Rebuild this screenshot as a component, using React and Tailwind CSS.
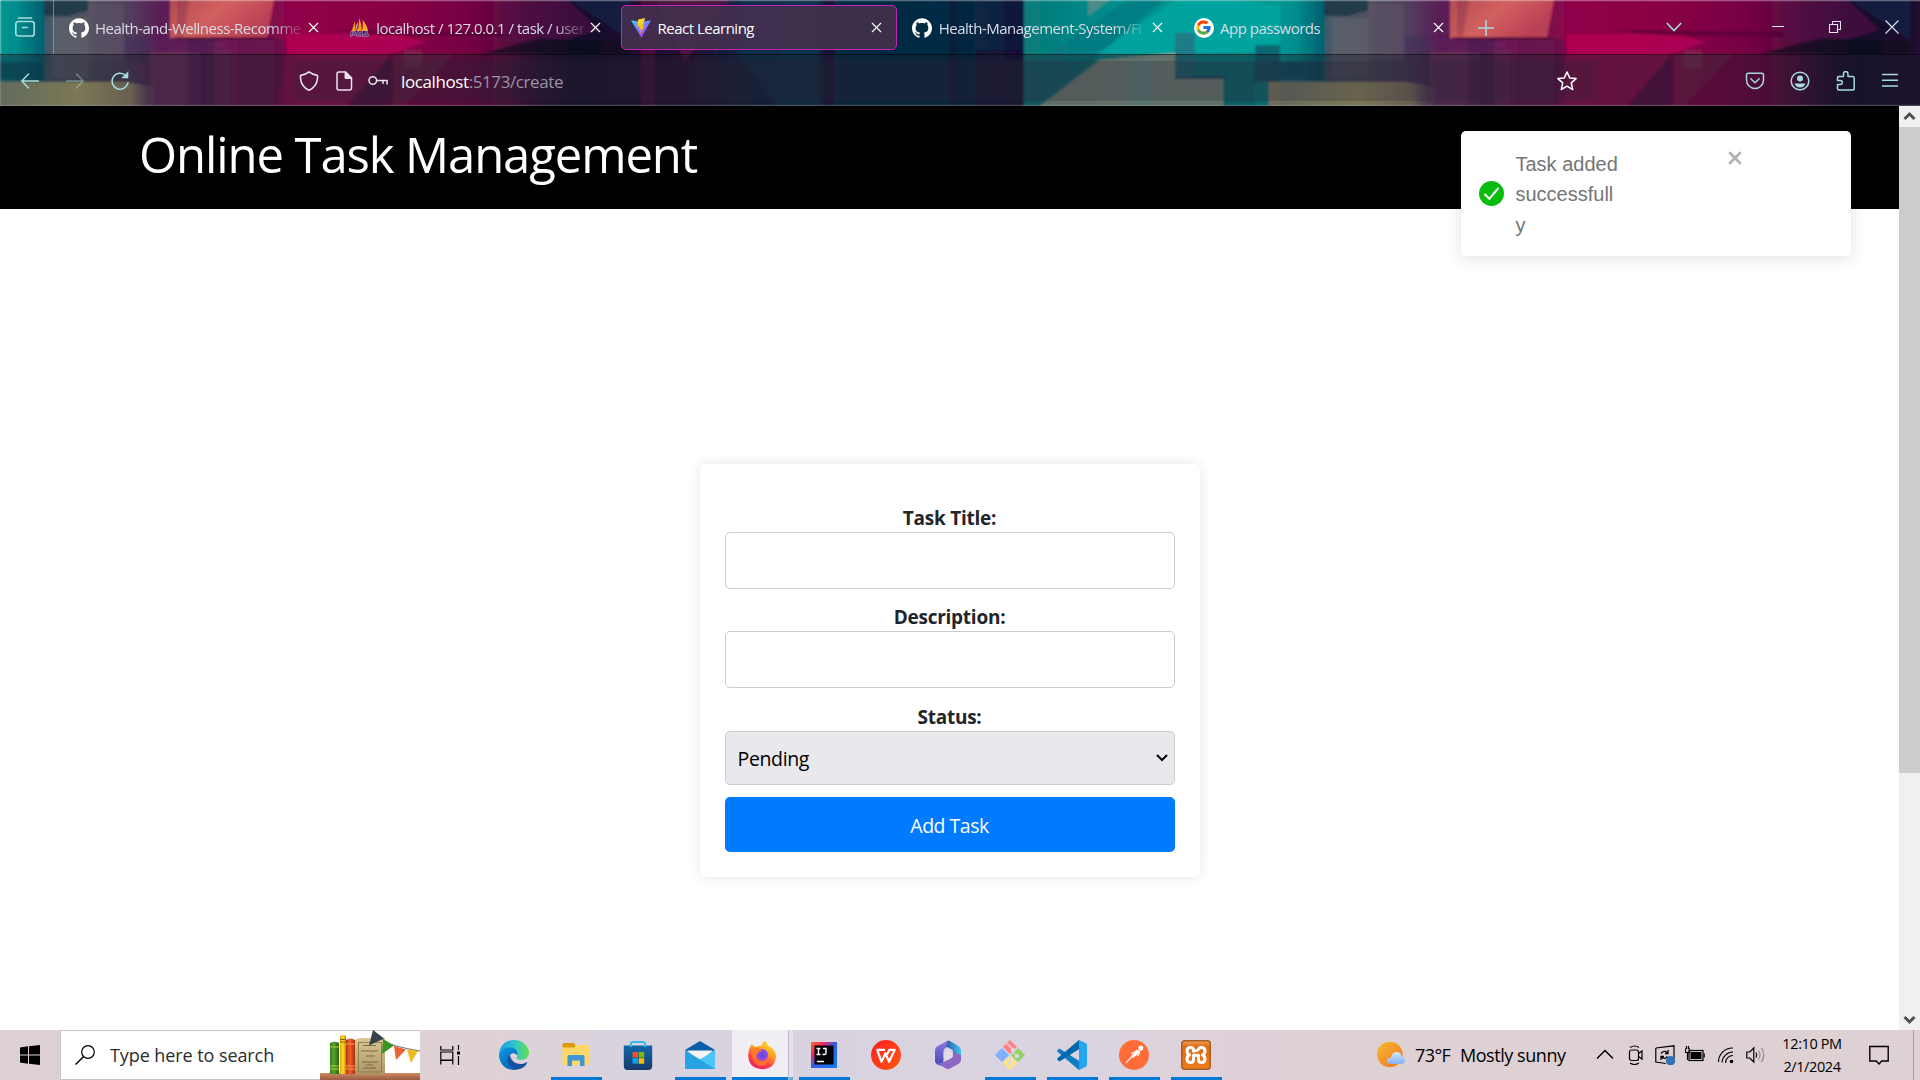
import React from "react";
import { SiGithub } from "react-icons/si";
import { FcGoogle } from "react-icons/fc";
import { X } from "lucide-react";

const UI = "font-['Open_Sans','Noto_Sans',sans-serif]";

/* One 1280px wide tile of the browser theme artwork */
function ThemeTile() {
  return (
    <g id="tile">
      <rect width="1281" height="106" fill="url(#base)" />
      <rect width="20" height="60" fill="#00a09c" opacity=".3" />
      <rect y="62" width="43" height="18" fill="#004c62" opacity=".6" />
      <path d="M44 0h44v10l-20 6H44z" fill="#10303f" opacity=".7" />
      <rect x="52" y="18" width="36" height="60" fill="#6c6870" opacity=".45" />
      <rect x="88" y="4" width="36" height="56" fill="#66586c" opacity=".4" />
      <rect x="125" y="36" width="24" height="26" fill="#3a2c58" opacity=".4" />
      <path d="M0 82h125l30 5v19H0z" fill="url(#sand)" />
      <rect x="150" y="52" width="50" height="54" fill="#8a5068" opacity=".35" />
      <rect x="188" y="38" width="26" height="68" fill="#3d1c4c" opacity=".45" />
      <rect x="214" y="50" width="16" height="56" fill="#6d2858" opacity=".5" />
      <rect x="238" y="40" width="46" height="66" fill="#5c164c" opacity=".6" />
      <path d="M170 0h104l-7 38h-97z" fill="url(#coral)" />
      <path d="M177 0h12l-6 36h-6z" fill="#7c2c48" opacity=".35" />
      <path d="M171 37h97l14 3H180z" fill="#4c0a30" opacity=".7" />
      <path d="M286 34h110l30 8-40 14H288z" fill="#bb0058" opacity=".7" />
      <path d="M330 30l180 2v5l-130-2z" fill="#4e0034" opacity=".6" />
      <path d="M392 54l-45 52h45z" fill="#4d0d45" opacity=".75" />
      <path d="M278 106l8-50h105l-45 50z" fill="#a01058" opacity=".45" />
      <path d="M394 54h60l-50 52h-10z" fill="#77304e" opacity=".5" />
      <rect x="404" y="50" width="18" height="18" fill="#81435c" opacity=".4" />
      <path d="M503 0h66l30 30-40 12h-56z" fill="#591049" opacity=".6" />
      <path d="M570 0h60v40z" fill="#162048" opacity=".7" />
      <path d="M480 54l60-16 90 4v12z" fill="#100a20" opacity=".7" />
      <path d="M641 0h14v106h-14z" fill="#7b0c48" opacity=".4" />
      <path d="M655 0h75l-45 62z" fill="#6d154b" opacity=".55" />
      <path d="M740 0h78v106h-40l-40-50z" fill="#103752" opacity=".6" />
      <rect x="822" width="13" height="106" fill="#1e0c35" opacity=".8" />
      <rect x="950" y="0" width="6" height="106" fill="#100c30" opacity=".5" />
      <rect x="976" y="50" width="48" height="56" fill="#1b1236" opacity=".75" />
      <rect x="1004" width="20" height="60" fill="#160e35" opacity=".5" />
      <path d="M1095 54l80-54h60l50 6v44l-110 4z" fill="#00aaa4" opacity=".7" />
      <path d="M1088 0h22l-22 16z" fill="#4a8c88" />
      <path d="M1024 106V70l104-70h36l-120 100z" fill="#087480" opacity=".6" />
      <path d="M1040 106l60-46 75-7v25h48v28z" fill="#a9ab92" opacity=".85" />
      <rect x="1130" y="60" width="22" height="46" fill="#6fb3ab" opacity=".4" />
      <rect x="1175" y="33" width="20" height="46" fill="#1f7884" opacity=".9" />
      <path d="M1195 54h60V44h26v38h-26v24h-30V78h-30z" fill="#008583" opacity=".85" />
      <path d="M1194 60v16h32v3h-51v-2h18z" fill="#0a4a60" opacity=".7" />
      <path d="M1256 46h25v36h-28z" fill="#0b5d6c" opacity=".8" />
      <path d="M1269 82h12v24h-12z" fill="#a8a578" />
    </g>
  );
}

function ThemeArt() {
  return (
    <svg className="absolute inset-0 h-[106px] w-[1920px]" viewBox="0 0 1920 106">
      <defs>
        <linearGradient id="base" x1="0" x2="1280" y1="0" y2="0" gradientUnits="userSpaceOnUse">
          <stop offset="0" stopColor="#009090" />
          <stop offset=".018" stopColor="#008084" />
          <stop offset=".034" stopColor="#006070" />
          <stop offset=".036" stopColor="#445968" />
          <stop offset=".07" stopColor="#50505f" />
          <stop offset=".1" stopColor="#51405d" />
          <stop offset=".125" stopColor="#5a1c56" />
          <stop offset=".17" stopColor="#681c58" />
          <stop offset=".215" stopColor="#800c4c" />
          <stop offset=".23" stopColor="#900048" />
          <stop offset=".3" stopColor="#8a0046" />
          <stop offset=".36" stopColor="#780044" />
          <stop offset=".39" stopColor="#62083f" />
          <stop offset=".42" stopColor="#310d35" />
          <stop offset=".45" stopColor="#11102a" />
          <stop offset=".5" stopColor="#210e30" />
          <stop offset=".54" stopColor="#281034" />
          <stop offset=".57" stopColor="#14203e" />
          <stop offset=".64" stopColor="#092a42" />
          <stop offset=".66" stopColor="#062a42" />
          <stop offset=".73" stopColor="#042b44" />
          <stop offset=".799" stopColor="#0a2040" />
          <stop offset=".8" stopColor="#087a7a" />
          <stop offset=".88" stopColor="#00908e" />
          <stop offset="1" stopColor="#009793" />
        </linearGradient>
        <linearGradient id="coral" x1="0" x2="1" y1="0" y2=".4">
          <stop offset="0" stopColor="#b34b55" />
          <stop offset=".5" stopColor="#d2605e" />
          <stop offset="1" stopColor="#b83f56" />
        </linearGradient>
        <linearGradient id="sand" x1="0" x2="1">
          <stop offset="0" stopColor="#92a080" />
          <stop offset=".5" stopColor="#bdb672" />
          <stop offset=".85" stopColor="#9a8c6c" />
          <stop offset="1" stopColor="#70506a" stopOpacity=".3" />
        </linearGradient>
        <filter id="soft" x="0" y="0" width="100%" height="100%">
          <feGaussianBlur stdDeviation="1.3" />
        </filter>
      </defs>
      <g filter="url(#soft)">
        <ThemeTile />
        <use href="#tile" x="1280" />
      </g>
      <rect y="54" width="1920" height="52" fill="#1c1b2a" opacity=".4" />
      <rect y="54" width="1920" height="1" fill="#000" opacity=".45" />
    </svg>
  );
}

function PmaIcon() {
  return (
    <svg viewBox="0 0 20 20" className="size-5">
      <path d="M1.500 13C3 10 4 6 4.500 3c1 3 1 7 .5 10zM7 13c2-4 2-9 2-13 2 4 3 9 2.500 13z" fill="#f89c0e" />
      <path d="M12 13c1-3 1-7 .5-11 3 3 5 7 5.500 11z" fill="#f9a825" />
      <path d="M6 13c1-3 2-6 2-9-2 3-2 6-3 9z" fill="#c9c9d8" />
      <path d="M.8 19l1-5h2.500q1.500 1.500-.5 3H1.800M7 19l1-5 1.500 3 2.500-3-.5 5M13.500 19l3-5 2 5M14.500 17.500h3" fill="none" stroke="#fff" strokeWidth="2" opacity=".6" />
      <path d="M.8 19l1-5h2.500q1.500 1.500-.5 3H1.800M7 19l1-5 1.500 3 2.500-3-.5 5M13.500 19l3-5 2 5M14.500 17.500h3" fill="none" stroke="#3b3f88" strokeWidth="1.200" />
    </svg>
  );
}

function ViteIcon() {
  return (
    <svg viewBox="0 0 20 20" className="size-5">
      <defs>
        <linearGradient id="vt" x1="0" x2=".6" y1="0" y2="1">
          <stop offset="0" stopColor="#41d1ff" />
          <stop offset="1" stopColor="#b030fe" />
        </linearGradient>
        <linearGradient id="vb" x1="0" x2="0" y1="0" y2="1">
          <stop offset="0" stopColor="#ffdd35" />
          <stop offset="1" stopColor="#ffa800" />
        </linearGradient>
      </defs>
      <path d="M0 2.300l10 1.800 10-1.800L10.400 19.800z" fill="url(#vt)" />
      <path d="M14.200 0L7.100 1.400 6.600 9.100l2.200-.5-.7 3.300 1.900-.6-1.200 4.900 4.700-8-2.100.4z" fill="url(#vb)" />
    </svg>
  );
}

const tabs = [
  { icon: <SiGithub className="size-5 text-white" />, title: "Health-and-Wellness-Recomme", fade: true },
  { icon: <PmaIcon />, title: "localhost / 127.0.0.1 / task / user", fade: true },
  { icon: <ViteIcon />, title: "React Learning", active: true },
  { icon: <SiGithub className="size-5 text-white" />, title: "Health-Management-System/Fi", fade: true },
  {
    icon: (
      <span className="flex size-5 items-center justify-center rounded-full bg-white">
        <FcGoogle className="size-[17px]" />
      </span>
    ),
    title: "App passwords",
  },
];

function Tab({ icon, title, fade, active }) {
  return (
    <div
      className={
        "flex h-[45px] w-[276.25px] shrink-0 items-center rounded-[5px] border pl-[9.500px] pr-[11px] " +
        (active ? "border-[#c223b4] bg-[#42304e]/90" : "border-transparent")
      }
    >
      <span className="shrink-0">{icon}</span>
      <span
        className={
          "ml-[6.500px] w-[209px] whitespace-nowrap text-[15px] leading-6 tracking-[-0.5px] " +
          (active ? "text-white " : "text-[#d8dce6] ") +
          (fade ? "[mask-image:linear-gradient(to_right,black_84%,rgba(0,0,0,0.15))]" : "")
        }
      >
        {title}
      </span>
      <X className="ml-[3px] size-[17px] shrink-0 text-white" strokeWidth={1.600} />
    </div>
  );
}

function TabBar() {
  return (
    <div className="flex h-[54px] items-start text-[#a5dbde]">
      <div className="flex h-[54px] w-[54px] items-center justify-end border-r border-[#8f9fae]/70 pr-[18px]">
        <svg className="size-5" viewBox="0 0 20 20" fill="none" stroke="currentColor" strokeWidth="1.700" strokeLinecap="round">
          <path d="M3.500 1h13" />
          <rect x=".8" y="4.500" width="18.400" height="14.500" rx="2.500" />
          <path d="M7.500 10.500h5" />
        </svg>
      </div>
      <div className="ml-[4px] flex gap-[5px] pt-[5px]">
        {tabs.map((t) => (
          <Tab key={t.title} {...t} />
        ))}
      </div>
      <svg className="ml-[19px] mt-[20px] size-4" viewBox="0 0 16 16" stroke="currentColor" strokeWidth="1.500">
        <path d="M8 0v16M0 8h16" />
      </svg>
      <svg className="ml-[172px] mt-[22px] h-2.5 w-4" viewBox="0 0 16 10" fill="none" stroke="currentColor" strokeWidth="1.600">
        <path d="M.8 1L8 8.500 15.200 1" />
      </svg>
      <svg className="ml-[90px] mt-[20px] h-[14px] w-3" viewBox="0 0 12 14" stroke="#e5e5f0">
        <path d="M0 6.500h12" />
      </svg>
      <svg className="ml-[45px] mt-[21px] size-3" viewBox="0 0 12 12" fill="none" stroke="#e5e5f0" strokeWidth="1.100">
        <path d="M.5 3.500h8v8h-8zM3.500 3.500v-3h8v8h-3" />
      </svg>
      <svg className="ml-[44px] mt-[20px] size-[14px]" viewBox="0 0 14 14" stroke="#d8dce6" strokeWidth="1.200">
        <path d="M.5.5l13 13M13.500.5l-13 13" />
      </svg>
    </div>
  );
}

function ToolIcon({ className, children }) {
  return (
    <svg
      className={"size-5 shrink-0 " + className}
      viewBox="0 0 20 20"
      fill="none"
      stroke="currentColor"
      strokeWidth="1.500"
      strokeLinecap="round"
      strokeLinejoin="round"
    >
      {children}
    </svg>
  );
}

function Toolbar() {
  return (
    <div className="flex h-[52px] items-center pt-px text-[#a5dbde]">
      <ToolIcon className="ml-[20px]">
        <path d="M18.500 10H1.800M8.500 3L1.800 10l6.700 7" />
      </ToolIcon>
      <ToolIcon className="ml-[25px] opacity-45">
        <path d="M1.500 10h16.700M11.500 3l6.700 7-6.700 7" />
      </ToolIcon>
      <ToolIcon className="ml-[25px]">
        <path d="M18 11.500A8 8 0 1 1 15.700 4.500" />
        <path d="M18 1v6h-6z" fill="currentColor" strokeWidth=".6" />
      </ToolIcon>
      <div className="ml-[164px] flex h-10 w-[1304px] items-center rounded bg-[#2b2338]/25 pl-[5px] text-[#ece4ee]">
        <ToolIcon>
          <path d="M10 .8q3.500 2.800 8.500 3.600v3C18 13 15 17 10 19.200 5 17 2 13 1.500 7.400v-3Q6.500 3.600 10 .8z" />
        </ToolIcon>
        <ToolIcon className="ml-[15px]">
          <path d="M3 3q0-2 2-2h6.500l6 6V17q0 2-2 2H5q-2 0-2-2zM11.500 1v6h6" />
          <path d="M11.500 1l6 6h-6z" fill="currentColor" />
        </ToolIcon>
        <ToolIcon className="ml-[14px]">
          <circle cx="4.800" cy="9.500" r="3.800" />
          <path d="M8.600 9.500h10.500V13M15 9.500v3" />
        </ToolIcon>
        <span className="ml-[13px] w-[1156px] pt-[2px] text-[17px] leading-6 tracking-[-0.4px] text-[#9b93a3]">
          <span className="text-white">localhost</span>:5173/create
        </span>
        <ToolIcon className="text-white">
          <path d="M10 1l2.700 5.900 6.400.7-4.800 4.300 1.400 6.600L10 15.200l-5.700 3.300 1.400-6.600L.9 7.600l6.400-.7z" />
        </ToolIcon>
      </div>
      <ToolIcon className="ml-[147px]">
        <path d="M1.500 4q0-1.800 1.800-1.800h13.400q1.800 0 1.800 1.800v5a8.500 8.500 0 0 1-17 0zM5.800 7.800L10 11.800l4.200-4" />
      </ToolIcon>
      <ToolIcon className="ml-[25px]">
        <circle cx="10" cy="10" r="8.800" />
        <circle cx="10" cy="7.500" r="3" fill="currentColor" stroke="none" />
        <path d="M4.500 12.500h11q-1.500 4-5.500 4t-5.500-4z" fill="currentColor" stroke="none" />
      </ToolIcon>
      <ToolIcon className="ml-[26px]">
        <path d="M3 19q-1.500 0-1.500-1.500V13.500h2.800q2 0 2-2t-2-2H1.500V6.800q0-1.300 1.300-1.300H7.500V3q0-2.500 2.200-2.500T12 3v2.500h4.500q1.700 0 1.700 1.700v10q0 1.800-1.700 1.800z" />
      </ToolIcon>
      <ToolIcon className="ml-[24px]">
        <path d="M2.500 3.500h15M2.500 9.200h15M2.500 15h15" />
      </ToolIcon>
    </div>
  );
}

function Field({ label, children }) {
  return (
    <div className="flex flex-col">
      <label className="h-[30px] pt-[2px] text-center text-[19px] font-bold leading-[28px] tracking-[-0.25px] text-[#212529]">{label}</label>
      {children}
    </div>
  );
}

function TaskForm() {
  return (
    <form className="flex h-[413px] w-[500px] flex-col rounded-[5px] bg-white px-[25px] pt-[38px] shadow-[0_0_13px_rgba(0,0,0,0.1)]">
      <Field label="Task Title:">
        <input className="h-[57px] rounded-[5px] border border-[#ccc] px-3" />
      </Field>
      <div className="h-[12px]" />
      <Field label="Description:">
        <input className="h-[57px] rounded-[5px] border border-[#ccc] px-3" />
      </Field>
      <div className="h-[13px]" />
      <Field label="Status:">
        <div className="flex h-[54px] items-center justify-between rounded-[5px] border border-[#ccc] bg-[#e9e9ed] pl-[12px] pr-[6px] text-[19.500px] tracking-[-0.35px] text-black">
          <span className="pt-[2px]">Pending</span>
          <svg className="h-2 w-3" viewBox="0 0 12 8" fill="none" stroke="#000" strokeWidth="2">
            <path d="M1 1l5 5 5-5" />
          </svg>
        </div>
      </Field>
      <button type="button" className="mt-[12px] h-[55px] rounded-[5px] bg-[#007bff] pt-[2px] text-[19.500px] tracking-[-0.5px] text-white">
        Add Task
      </button>
    </form>
  );
}

function Toast() {
  return (
    <div className="absolute left-[1461px] top-[25px] flex h-[125px] w-[390px] rounded-[5px] bg-white shadow-[0_2px_18px_rgba(0,0,0,0.12)]">
      <svg className="ml-[17.500px] mt-[50px] size-[25px] shrink-0" viewBox="0 0 25 25">
        <circle cx="12.500" cy="12.500" r="12.500" fill="#07bc0c" />
        <path d="M6 13.500l4.300 4.300L19 7.500" fill="none" stroke="#fff" strokeWidth="2" strokeLinecap="round" />
      </svg>
      <div className="ml-[12px] mt-[17.500px] w-[105px] break-words font-['Liberation_Sans',Arial,sans-serif] text-[20px] leading-[30.500px] text-[#757575]">
        Task added successfull
        <br />y
      </div>
      <svg className="ml-[107px] mt-[20px] size-[14px]" viewBox="0 0 14 14" stroke="#b2b2b2" strokeWidth="2.800" strokeLinecap="round">
        <path d="M2 2l10 10M12 2L2 12" />
      </svg>
    </div>
  );
}

function ScrollBar() {
  return (
    <div className="flex w-[21px] shrink-0 flex-col bg-[#f0f0f0]">
      <svg className="h-[21px] w-[21px]" viewBox="0 0 21 21" fill="none" stroke="#505050" strokeWidth="3">
        <path d="M5.500 13l5-5 5 5" />
      </svg>
      <div className="h-[646px] bg-[#cdcdcd]" />
      <div className="grow" />
      <svg className="h-[21px] w-[21px]" viewBox="0 0 21 21" fill="none" stroke="#505050" strokeWidth="3">
        <path d="M5.500 8l5 5 5-5" />
      </svg>
    </div>
  );
}

function Books() {
  return (
    <svg className="h-[50px] w-[100px] shrink-0" viewBox="0 0 100 50">
      <defs>
        <linearGradient id="bg1" x1="0" x2="1"><stop offset="0" stopColor="#2b7a12" /><stop offset=".4" stopColor="#56a52a" /><stop offset="1" stopColor="#1f6410" /></linearGradient>
        <linearGradient id="bg2" x1="0" x2="1"><stop offset="0" stopColor="#d8a908" /><stop offset=".5" stopColor="#ffdc2c" /><stop offset="1" stopColor="#bd8d06" /></linearGradient>
        <linearGradient id="bg3" x1="0" x2="1"><stop offset="0" stopColor="#b63410" /><stop offset=".45" stopColor="#f2602b" /><stop offset="1" stopColor="#a82d0c" /></linearGradient>
        <linearGradient id="bg4" x1="0" x2="0" y1="0" y2="1"><stop offset="0" stopColor="#d9c794" /><stop offset="1" stopColor="#ac9364" /></linearGradient>
        <linearGradient id="bg5" x1="0" x2="0" y1="0" y2="1"><stop offset="0" stopColor="#d08863" /><stop offset="1" stopColor="#995b40" /></linearGradient>
      </defs>
      <rect y="43" width="100" height="7" fill="url(#bg5)" />
      <path d="M35 10q3-2 6-2h24v37H35z" fill="url(#bg4)" />
      <path d="M38.500 12.500h23V42h-23z" fill="none" stroke="#8e7848" strokeWidth=".9" />
      <path d="M43 15.500h13M41 21h17M46 26h9M42 32h16M46 35h7M43 38h13" stroke="#7d6b48" strokeWidth="1.100" />
      <path d="M10 13q4.500-2.500 9 0v31h-9z" fill="url(#bg1)" />
      <path d="M10 17h9M10 36h9M10 39h9" stroke="#b7cb38" />
      <path d="M20 6q3-2 6 0v38h-6z" fill="url(#bg2)" />
      <path d="M20 9.500h6M20 12h6" stroke="#8b6408" />
      <path d="M26 10q4.500-3 9 0v34h-9z" fill="url(#bg3)" />
      <path d="M26 14h9M26 36h9M26 39h9" stroke="#f5a13c" />
      <path d="M54 1q10 12 22 15t24 5" stroke="#74706c" fill="none" />
      <path d="M53 0l11 8.500L49 15.500z" fill="#35424e" />
      <path d="M63 9l11 6.500L62 24z" fill="#3c9321" />
      <path d="M74 16l12 3.500L76 30z" fill="#eb6132" />
      <path d="M87 19.500l11 1.500L91 33z" fill="#eebb1d" />
    </svg>
  );
}

const TB = "size-[30px]";

function EdgeIcon() {
  return (
    <svg className={TB} viewBox="0 0 30 30">
      <defs>
        <linearGradient id="e1" x1="0" x2="1"><stop offset="0" stopColor="#1b9de2" /><stop offset=".5" stopColor="#2dc3d0" /><stop offset="1" stopColor="#67e04f" /></linearGradient>
        <linearGradient id="e2" x1="0" x2=".7" y1="0" y2="1"><stop offset="0" stopColor="#0c9be0" /><stop offset="1" stopColor="#0561b8" /></linearGradient>
      </defs>
      <path d="M.3 12.500C2 3 9 0 15 0c9 0 15 6.500 15 12.500 0 5-3.500 7.500-8 7.500-3.500 0-5-1.400-4-2.800C20 12 16 8.500 11 8.500c-5 0-9 2-10.700 4z" fill="url(#e1)" />
      <path d="M.2 13C2 9.500 7 7 12 7.500c5 .5 7.500 4.500 6.200 8.200C17 13 13 12 11 15c-3 5 0 12 8 14.300C9 32-1 25 .2 13z" fill="url(#e2)" />
      <path d="M11 14.500c-6 6-.5 14.500 7.500 14.800 4.500 0 8.500-3.500 9.500-6.300.3-.8-.4-1-1-.6-7 4-15.500 0-16-7.900z" fill="#1453a0" />
    </svg>
  );
}

function FolderIcon() {
  return (
    <svg className={TB} viewBox="0 0 30 30">
      <path d="M1.500 4.500q0-1.500 1.500-1.500h10l1.500 2v6h-13z" fill="#dc9a10" />
      <path d="M1.500 7.500h12l2.500-2.500h12.500v20h-27z" fill="#ffd868" />
      <path d="M6.500 26V17q0-2 2-2h13q2 0 2 2v9h-4.500v-5.500h-8V26z" fill="#3f94d4" />
    </svg>
  );
}

function StoreIcon() {
  return (
    <svg className={TB} viewBox="0 0 30 30">
      <defs><linearGradient id="st" x1="0" x2="0" y1="0" y2="1"><stop offset="0" stopColor="#1268aa" /><stop offset="1" stopColor="#173a6a" /></linearGradient></defs>
      <path d="M.8 5.500h28.400V26q0 4-4 4H4.800q-4 0-4-4z" fill="url(#st)" />
      <path d="M8 7V3.500Q8 2 9.500 2h11Q22 2 22 3.500V7" fill="none" stroke="#34b8ee" strokeWidth="1.800" />
      <path d="M9.500 12H15v5.500H9.500z" fill="#f25022" /><path d="M15.700 12h5.500v5.500h-5.500z" fill="#7fba00" />
      <path d="M9.500 18.200H15v5.500H9.500z" fill="#00a4ef" /><path d="M15.700 18.200h5.500v5.500h-5.500z" fill="#ffb900" />
    </svg>
  );
}

function MailIcon() {
  return (
    <svg className={TB} viewBox="0 0 30 30">
      <path d="M0 10L15 1l15 9-15 10z" fill="#0a5eaa" />
      <path d="M2 10.500h26L15 22z" fill="#f2f4f6" />
      <path d="M0 10.500L15 19.500 30 10.500V29H0z" fill="#35b5f1" />
      <path d="M0 29L30 10.500V29z" fill="#4cc5f8" />
      <path d="M0 10.500L30 29H0z" fill="#27a3e4" />
    </svg>
  );
}

function FirefoxIcon() {
  return (
    <svg className={TB} viewBox="0 0 30 30">
      <defs>
        <linearGradient id="f1" x1=".8" x2=".3" y1="0" y2="1"><stop offset="0" stopColor="#ffe63b" /><stop offset=".4" stopColor="#ff9f20" /><stop offset=".75" stopColor="#ff3c48" /><stop offset="1" stopColor="#e61f68" /></linearGradient>
        <radialGradient id="f2"><stop offset="0" stopColor="#6540d6" /><stop offset="1" stopColor="#9150e8" /></radialGradient>
      </defs>
      <path d="M4.500 4.500L8.500 7q3-1.500 6-1.500Q15.500 2 18.500.3q.5 3.500 4 6.200L25 8q4 4 4 8.500Q28 29 15 29.200 2 28.500 1.200 16 1.500 9 4.500 4.500z" fill="url(#f1)" />
      <circle cx="15.300" cy="14.800" r="5.800" fill="url(#f2)" />
      <path d="M4 10q4-3.500 8-1.500l4 2.500q-4 .2-5 2.500-2 0-2.500 2 1 6 7 6 5-.3 6.500-4-1 8-8 8.500Q5 25 4 10z" fill="#ff7a2a" opacity=".85" />
    </svg>
  );
}

function IntelliJIcon() {
  return (
    <svg className={TB} viewBox="0 0 30 30">
      <defs><linearGradient id="ij" x1="0" x2="1" y1="0" y2="1"><stop offset="0" stopColor="#ff6b24" /><stop offset=".28" stopColor="#e72865" /><stop offset=".5" stopColor="#3060e8" /><stop offset="1" stopColor="#167bf0" /></linearGradient></defs>
      <rect x="2" y="2" width="26" height="26" fill="url(#ij)" />
      <rect x="5.500" y="5.500" width="19" height="19" fill="#050308" />
      <path d="M7.500 8.500h4M9.500 8.500v6M7.500 14.500h4M14 8.500h3v4.500q0 1.500-1.500 1.500H13.500M8 21.500h7" stroke="#fff" strokeWidth="1.400" fill="none" />
    </svg>
  );
}

function WpsIcon() {
  return (
    <svg className={TB} viewBox="0 0 30 30">
      <defs><linearGradient id="wp" x1="0" x2="1" y1="0" y2="1"><stop offset="0" stopColor="#ff1c24" /><stop offset="1" stopColor="#ff5a0c" /></linearGradient></defs>
      <circle cx="15" cy="15" r="15" fill="url(#wp)" />
      <path d="M14 9.800H6.200l4.300 12 4-8.500 3.500 8.500L23.800 9.800h-5.300l-2.500 4.700" fill="none" stroke="#fff" strokeWidth="2.200" strokeLinejoin="round" />
    </svg>
  );
}

function M365Icon() {
  return (
    <svg className={TB} viewBox="0 0 30 30">
      <defs>
        <linearGradient id="m1" x1="0" x2="0" y1="0" y2="1"><stop offset="0" stopColor="#8c7ae0" /><stop offset="1" stopColor="#4148b8" /></linearGradient>
        <linearGradient id="m2" x1="0" x2="1"><stop offset="0" stopColor="#2858a8" /><stop offset="1" stopColor="#44c4f0" /></linearGradient>
      </defs>
      <path d="M14 1L4 6.500Q2 8 2 10v11q0 2 2 3.200l3 1.300q4-2 3.500-6V11q0-2 2-3l6-3.500z" fill="url(#m1)" />
      <path d="M14 1q2-.5 4 .5l8 5q2 1.500 2 4v7.500l-8 1.500V12q0-2-2-3l-5-2.500q2-3 1-5.500z" fill="url(#m2)" />
      <path d="M28 15v5q0 2-2 3.500L17 28.500q-2 1-4 0L4 23.500q5 0 8-2l7.500-4.500q2-1.500.5-5z" fill="#8e66c4" />
      <path d="M15 10.200l4.300 2.500v4.800L15 20l-4.300-2.500v-4.800z" fill="#e0dce9" />
    </svg>
  );
}

function GitIcon() {
  return (
    <svg className={TB} viewBox="0 0 30 30">
      <path d="M15 0l7 7-7 7-7-7z" fill="#ff8080" /><path d="M7 8l7 7-7 7-7-7z" fill="#80b0ff" />
      <path d="M23 8l7 7-7 7-7-7z" fill="#8fd45c" /><path d="M15 16l7 7-7 7-7-7z" fill="#ffe680" />
      <path d="M12 3.500l6 6M15 16v8M17 12l5 4" stroke="#ddd6e1" strokeWidth="1.500" />
      <circle cx="18" cy="10" r="2.200" fill="#ddd6e1" /><circle cx="15" cy="23" r="2.200" fill="#ddd6e1" /><circle cx="22" cy="16" r="2.200" fill="#ddd6e1" />
    </svg>
  );
}

function CodeIcon() {
  return (
    <svg className={TB} viewBox="0 0 30 30">
      <path d="M2.500 8.500L.5 10.300q-.7 1 .2 1.800L22 30l1-8.500z" fill="#0f7dc5" />
      <path d="M2.500 21.500l-2-1.800q-.7-1 .2-1.800L22 0l1 8.500z" fill="#0068ad" />
      <path d="M22 0l6.500 3q1.500.7 1.500 2.500v19q0 1.800-1.500 2.500L22 30z" fill="#23a5f0" />
    </svg>
  );
}

function PostmanIcon() {
  return (
    <svg className={TB} viewBox="0 0 30 30">
      <circle cx="15" cy="15" r="15" fill="#ff6c37" />
      <circle cx="21.800" cy="8" r="2.500" fill="#fff" />
      <path d="M19 9.500l2.500 2-7 6.300-2.700-1.200z" fill="#fff" />
      <path d="M13 16.500L6.800 22.800M18 10.500l-6 3.500M20.500 12q0 2.500-2.500 4" stroke="#fff" strokeWidth="1.100" fill="none" />
    </svg>
  );
}

function XamppIcon() {
  return (
    <svg className={TB} viewBox="0 0 30 30">
      <defs><linearGradient id="xp" x1="0" x2="0" y1="0" y2="1"><stop offset="0" stopColor="#f4a35f" /><stop offset=".2" stopColor="#dc6d16" /><stop offset="1" stopColor="#ee7b1c" /></linearGradient></defs>
      <rect x=".7" y=".7" width="28.600" height="28.600" rx="3" fill="url(#xp)" stroke="#a75c22" strokeWidth="1.400" />
      <path
        d="M12.500 12.500v-2.300Q12.300 7.500 9.500 7.500 6 7.500 6 11q0 3 2.500 4Q6 16 6 19q0 3.500 3.500 3.500 3 0 3-3v-4.300h5v4.300q0 3 3 3 3.500 0 3.500-3.500 0-3-2.500-4 2.500-1 2.500-4 0-3.500-3.500-3.500-3 0-3 2.700"
        fill="none"
        stroke="#fff"
        strokeWidth="3"
        strokeLinejoin="round"
      />
      <path d="M12.500 9.500q2.500 2.500 5 0" fill="none" stroke="#fff" strokeWidth="2.500" />
    </svg>
  );
}

const apps = [
  { id: "edge", Icon: EdgeIcon },
  { id: "explorer", Icon: FolderIcon, open: true },
  { id: "store", Icon: StoreIcon },
  { id: "mail", Icon: MailIcon, open: true },
  { id: "firefox", Icon: FirefoxIcon, current: true },
  { id: "intellij", Icon: IntelliJIcon, open: true },
  { id: "wps", Icon: WpsIcon },
  { id: "m365", Icon: M365Icon },
  { id: "git", Icon: GitIcon, open: true },
  { id: "code", Icon: CodeIcon, open: true },
  { id: "postman", Icon: PostmanIcon, open: true },
  { id: "xampp", Icon: XamppIcon, open: true },
];

function TaskbarApp({ Icon, open, current }) {
  if (current) {
    return (
      <div className="flex w-[62px] shrink-0">
        <div className="ml-px flex h-[50px] w-[56px] flex-col items-center bg-[#f0edf3]">
          <div className="flex h-[47px] items-center pl-[3px] pt-[3px]">
            <Icon />
          </div>
          <div className="h-[3px] w-[56px] bg-[#0078d7]" />
        </div>
        <div className="flex h-[50px] w-[5px] flex-col border-l border-[#bcb8c6] bg-[#e5e0ea]">
          <div className="grow" />
          <div className="h-[3px] bg-[#69acdf]" />
        </div>
      </div>
    );
  }
  return (
    <div className="flex w-[62px] shrink-0 flex-col items-center">
      <div className="flex h-[47px] items-center pt-[3px]">
        <Icon />
      </div>
      <div className={"h-[3px] w-[51px] " + (open ? "bg-[#0078d7]" : "")} />
    </div>
  );
}

function TrayIcon({ className, children }) {
  return (
    <svg className={"size-5 shrink-0 " + className} viewBox="0 0 20 20" fill="none" stroke="#000" strokeWidth="1.200">
      {children}
    </svg>
  );
}

function Taskbar() {
  return (
    <div className="flex h-[50px] items-center bg-[linear-gradient(90deg,#dcd0d4_0%,#dfd2d6_25%,#d9d2df_33%,#d9d4e0_55%,#dfd1da_64%,#ded1d4_72%,#ded1d4_100%)] text-black">
      <div className="flex w-[60px] justify-center">
        <svg className="size-5" viewBox="0 0 20 20">
          <path d="M0 2.500L8 1.300v8.200H0zM9 1.200L20 0v9.500H9zM0 10.500h8v8.200L0 17.500zM9 10.500h11V20L9 18.800z" />
        </svg>
      </div>
      <div className="flex h-[50px] w-[360px] items-center border border-r-0 border-[#c6c6c8] bg-white pl-[14px]">
        <TrayIcon>
          <circle cx="13" cy="7" r="6.300" />
          <path d="M8.700 11.500L.5 19.500" strokeWidth="1.500" />
        </TrayIcon>
        <span className="ml-[15px] w-[210px] whitespace-nowrap text-[18px] leading-6 tracking-[-0.08px] text-[#2c2c2c]">Type here to search</span>
        <Books />
      </div>
      <TrayIcon className="ml-[20px]">
        <path d="M.8 1v4h12V1M.8 19.500v-4h12v4M.8 7h12v8H.8zM18.500 0v5M18.500 11v9" />
        <path d="M17 6.500h3v3h-3z" fill="#000" stroke="none" />
      </TrayIcon>
      <div className="ml-[23px] flex">
        {apps.map((a) => (
          <TaskbarApp key={a.id} {...a} />
        ))}
      </div>
      <svg className="ml-[150px] h-[28px] w-[28px] shrink-0" viewBox="0 0 28 28">
        <defs>
          <linearGradient id="sun" x1="0" x2="1" y1="0" y2="1"><stop offset="0" stopColor="#f5bd35" /><stop offset="1" stopColor="#f5701b" /></linearGradient>
          <linearGradient id="cl" x1="0" x2="0" y1="0" y2="1"><stop offset="0" stopColor="#d5e7ff" /><stop offset="1" stopColor="#84aef2" /></linearGradient>
        </defs>
        <circle cx="12.800" cy="13.500" r="12.800" fill="url(#sun)" />
        <path d="M14 23q-4 0-4-3.200T14 16.500Q15 11 20 11q4 0 4.500 4.500Q28 16 28 19.300T24.500 23z" fill="url(#cl)" />
      </svg>
      <span className="ml-[10px] w-[45px] whitespace-nowrap text-[18px] leading-6 tracking-[-0.6px]">73°F</span>
      <span className="w-[126px] whitespace-nowrap text-[18px] leading-6 tracking-[-0.45px]">Mostly sunny</span>
      <TrayIcon className="ml-[9px]">
        <path d="M2 13.500l8-8 8 8" strokeWidth="1.500" />
      </TrayIcon>
      <TrayIcon className="ml-[11px]">
        <rect x="3.500" y="5" width="9" height="10.500" rx="2" />
        <path d="M12.500 8.500L16 6v8l-3.500-2.500M4 2.500Q8.500-.5 13 2.500M4 18q4.500 3 9 0" />
      </TrayIcon>
      <TrayIcon className="ml-[9px]">
        <path d="M.8 3L19 .8v13M.8 3v14l10 1.500" />
        <path d="M6 8.500q3-4 7-.5M13 5v3.500h-3M12.500 11.500q-3 3.500-6 .5M6 15v-3.500h3" strokeWidth="1.300" />
        <circle cx="15.500" cy="15.800" r="4.700" fill="#2f72b8" stroke="none" />
      </TrayIcon>
      <TrayIcon className="ml-[10px]">
        <rect x="4" y="5.500" width="14" height="10" />
        <rect x="5.500" y="7" width="11" height="7" fill="#000" stroke="none" />
        <path d="M19.200 8.500v4M.5 3.500v4h4v-4M1.500 1v3M3.500 1v3M2.500 7.500V15" />
      </TrayIcon>
      <TrayIcon className="ml-[12px]">
        <path d="M1.500 17A14 14 0 0 1 16 3M5 17.500A11 11 0 0 1 16 7M8.500 18a7.500 7.500 0 0 1 7.500-7.500" strokeWidth="1.100" />
        <circle cx="14.500" cy="16.500" r="1.800" fill="#000" stroke="none" />
      </TrayIcon>
      <TrayIcon className="ml-[9px]">
        <path d="M.8 7h3l4-4v14l-4-4h-3zM10 7.500q1.500 2.500 0 5" />
        <path d="M12.500 5.500q3 4.500 0 9M15.500 3q4.500 7 0 14" stroke="#000" opacity=".35" />
      </TrayIcon>
      <div className="ml-[11px] flex w-[70px] flex-col items-center whitespace-nowrap text-[14.500px] leading-[23px] tracking-[-0.4px]">
        <span>12:10 PM</span>
        <span>2/1/2024</span>
      </div>
      <TrayIcon className="ml-[22px]">
        <path d="M.8 1.500h18.400v14.500h-6.500L10 19l-2.700-3H.8z" strokeWidth="1.400" />
      </TrayIcon>
      <div className="ml-[24px] h-[50px] w-px bg-[#a79da0]" />
    </div>
  );
}

export default function App() {
  return (
    <div className={"flex h-[1080px] w-[1920px] flex-col overflow-hidden bg-white " + UI}>
      <div className="relative h-[106px] shrink-0 overflow-hidden">
        <ThemeArt />
        <div className="relative">
          <TabBar />
          <Toolbar />
        </div>
      </div>
      <div className="relative flex h-[924px] shrink-0">
        <div className="flex grow flex-col">
          <header className="flex h-[103px] items-center bg-black pb-[7px] pl-[139px]">
            <h1 className="whitespace-nowrap text-[49px] leading-[60px] tracking-[-1.1px] text-white">Online Task Management</h1>
          </header>
          <main className="flex grow justify-center pt-[255px]">
            <TaskForm />
          </main>
        </div>
        <ScrollBar />
        <Toast />
      </div>
      <Taskbar />
    </div>
  );
}
